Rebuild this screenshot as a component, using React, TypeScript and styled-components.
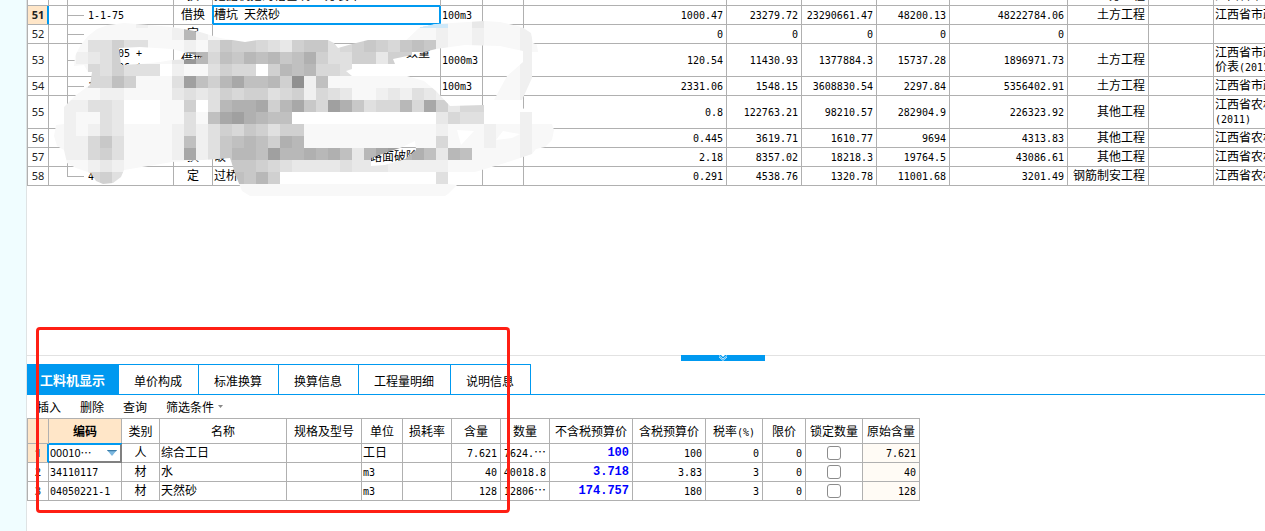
import React from 'react';
import styled, { createGlobalStyle, css } from 'styled-components';

const BLUE = '#0099f0';
const LINE = '#b0b0b0';
const PEACH = '#ffe6c8';

const GlobalStyle = createGlobalStyle`
  *, *::before, *::after { box-sizing: border-box; }
  body {
    margin: 0;
    background: #fff;
    color: #000;
    font: 12px/14px "Noto Sans CJK SC", sans-serif;
  }
  button, select { font: inherit; color: inherit; }
`;

const Page = styled.div`
  display: flex;
  height: 100vh;
  overflow: hidden;
`;

const SideStrip = styled.aside`
  flex: none;
  width: 27px;
  background: #f0fdff;
  border-right: 1px solid #dfe3e4;
`;

const Main = styled.main`
  flex: 1;
  min-width: 0;
  display: flex;
  flex-direction: column;
`;

const UpperPane = styled.section`
  position: relative;
  flex: 1;
  min-height: 0;
  overflow: hidden;
`;

const LowerPane = styled.section`
  position: relative;
  flex: none;
  min-height: 176px;
`;

const Mono = styled.span`
  font-family: "DejaVu Sans Mono", monospace;
  font-size: 10px;
  line-height: 10px;
`;

const Table = styled.table`
  table-layout: fixed;
  border-collapse: separate;
  border-spacing: 0;
  border-left: 1px solid ${LINE};
  width: 893px;
`;

/* Scrolled part-way down, with its last column running past the pane. */
const ScrolledTable = styled(Table)`
  width: calc(100% + 60px);
  margin-top: -13px;
`;

type Align = 'left' | 'center' | 'right';

const Cell = styled.td<{ $align?: Align; $soft?: boolean }>`
  padding: ${(p) => (p.$align === 'center' ? '0 0 2px' : '0 3px 2px 1px')};
  border-right: 1px solid ${LINE};
  border-bottom: 1px solid ${LINE};
  text-align: ${(p) => p.$align ?? 'left'};
  vertical-align: middle;
  white-space: nowrap;
  overflow: hidden;
  background: ${(p) => (p.$soft ? '#fffbf5' : 'transparent')};
`;

const Row = styled.tr<{ $tall?: boolean }>`
  height: ${(p) => (p.$tall ? '33px' : '19px')};
`;

const IndexCell = styled.th<{ $active?: boolean; $edge?: boolean }>`
  padding: 0;
  border-right: 1px solid ${LINE};
  border-bottom: 1px solid ${LINE};
  font: 11px/14px "Noto Sans", sans-serif;
  color: #222;
  text-align: center;
  ${(p) => p.$active && css`background: ${PEACH};`}
  ${(p) => p.$edge && css`
    font-weight: 700;
    border-right-color: ${BLUE};
    box-shadow: inset -1px 0 0 ${BLUE};
  `}
`;

const TreeCell = styled(Cell)<{ $last?: boolean }>`
  padding-left: 39px;
  background:
    linear-gradient(${LINE}, ${LINE}) 18px 0 / 1px ${(p) => (p.$last ? '50%' : '100%')} no-repeat,
    linear-gradient(${LINE}, ${LINE}) 18px 50% / 17px 1px no-repeat;
`;

const SelectedCell = styled(Cell)`
  position: relative;
  border-color: ${BLUE};
  box-shadow: -1px -1px 0 ${BLUE}, inset 1px 1px 0 ${BLUE}, inset -1px -1px 0 ${BLUE};
`;

const Indent = styled.span<{ $by: number }>`
  margin-left: ${(p) => p.$by}px;
`;

const HeadCell = styled.th<{ $active?: boolean }>`
  padding: 0 0 1px;
  border-right: 1px solid ${LINE};
  border-bottom: 1px solid ${LINE};
  font-weight: ${(p) => (p.$active ? 700 : 400)};
  background: ${(p) => (p.$active ? PEACH : '#fff')};
  white-space: nowrap;
`;

const HeadRow = styled.tr`
  & > th { border-top: 1px solid ${LINE}; height: 26px; }
`;

const Price = styled.b`
  font: 700 12px/14px "Liberation Mono", monospace;
  color: #00f;
`;

const Splitter = styled.div`
  display: flex;
  justify-content: center;
  height: 9px;
  padding-left: 154px;
  border-top: 1px solid #e2e2e2;
`;

const SplitterHandle = styled.button`
  width: 84px;
  height: 6px;
  margin-top: -1px;
  padding: 0;
  border: 0;
  background: ${BLUE};
  display: flex;
  justify-content: center;
`;

const TabBar = styled.nav`
  display: flex;
  height: 31px;
  border-bottom: 1px solid ${BLUE};
`;

const Tab = styled.button<{ $active?: boolean }>`
  padding: 2px 16px 0 15px;
  border: 0;
  border-top: 1px solid ${BLUE};
  border-right: 1px solid ${BLUE};
  background: #fff;
  ${(p) => p.$active && css`
    padding: 0 13px;
    background: ${BLUE};
    color: #fff;
    font-size: 13px;
    font-weight: 700;
  `}
`;

const Toolbar = styled.div`
  display: flex;
  align-items: center;
  gap: 19px;
  height: 23px;
  padding-left: 10px;
`;

const ToolButton = styled.button`
  display: flex;
  align-items: center;
  gap: 4px;
  padding: 0;
  border: 0;
  background: none;
`;

const DropCell = styled(Cell)`
  position: relative;
  padding: 0;
  border-right-color: #808080;
  border-bottom-color: #808080;
  box-shadow: -1px 0 0 ${BLUE}, 0 -1px 0 ${BLUE}, inset 0 1px 0 ${BLUE}, inset -1px -1px 0 #808080;
`;

const DropBody = styled.div`
  display: flex;
  align-items: center;
  padding-right: 4px;
`;

const CodeSelect = styled.select`
  appearance: none;
  flex: 1;
  min-width: 0;
  height: 16px;
  padding: 0 0 2px 1px;
  border: 0;
  background: transparent;
  font: 11px/14px "Noto Sans CJK SC", sans-serif;
`;

const Tick = styled.input`
  appearance: none;
  display: block;
  width: 14px;
  height: 14px;
  margin: 2px auto 0;
  border: 1px solid #8c8c8c;
  border-radius: 3px;
  background: #fff;
`;

const Mosaic = styled.svg`
  position: absolute;
  left: 25px;
  top: 16px;
  width: 504px;
  height: 180px;
`;

const Marker = styled.div`
  position: absolute;
  left: 9px;
  top: -28px;
  width: 474px;
  height: 186px;
  border: 3px solid #ff1f14;
  border-radius: 4px;
  pointer-events: none;
`;

/* Latin runs use the narrow fixed-width face, Chinese runs the page face. */
function T({ children }: { children: string }) {
  return (
    <>
      {children.split(/([\u2026\u2e80-\uffef]+)/).map((part, i) =>
        i % 2 ? part : part && <Mono key={i}>{part}</Mono>,
      )}
    </>
  );
}

type Quota = {
  no: number;
  code?: React.ReactNode;
  kind?: string;
  name?: React.ReactNode;
  unit?: string;
  nums: string[];
  work?: string;
  book?: string[];
  tall?: boolean;
};

const CITY = '江西省市政工程';
const FARM = '江西省农村公路';

const quotas: Quota[] = [
  { no: 50, kind: '换', name: '挖掘机挖沟槽基坑 土方装车', nums: ['', '', '', '', ''], work: '土方工程', book: [CITY] },
  { no: 51, code: <T>1-1-75</T>, kind: '借换', name: <T>槽坑 天然砂</T>, unit: '100m3', nums: ['1000.47', '23279.72', '23290661.47', '48200.13', '48222784.06'], work: '土方工程', book: [CITY] },
  { no: 52, kind: '定', nums: ['0', '0', '0', '0', '0'] },
  {
    no: 53,
    code: <><Indent $by={30}><T>05 +</T></Indent><br /><Indent $by={30}><T>06 *</T></Indent></>,
    kind: '借换',
    name: <><Indent $by={192}>数量</Indent><br />&nbsp;</>,
    unit: '1000m3',
    nums: ['120.54', '11430.93', '1377884.3', '15737.28', '1896971.73'],
    work: '土方工程',
    book: [CITY, '价表(2011)'],
    tall: true,
  },
  { no: 54, code: <T>1</T>, unit: '100m3', nums: ['2331.06', '1548.15', '3608830.54', '2297.84', '5356402.91'], work: '土方工程', book: [CITY] },
  { no: 55, nums: ['0.8', '122763.21', '98210.57', '282904.9', '226323.92'], work: '其他工程', book: [FARM, '(2011)'], tall: true },
  { no: 56, nums: ['0.445', '3619.71', '1610.77', '9694', '4313.83'], work: '其他工程', book: [FARM] },
  { no: 57, kind: '换', name: <>破<Indent $by={144}>路面破除</Indent></>, nums: ['2.18', '8357.02', '18218.3', '19764.5', '43086.61'], work: '其他工程', book: [FARM] },
  { no: 58, code: <T>4</T>, kind: '定', name: '过桥', nums: ['0.291', '4538.76', '1320.78', '11001.68', '3201.49'], work: '钢筋制安工程', book: [FARM] },
];

const quotaCols = [21, 125, 39, 228, 42, 41, 203, 75, 75, 73, 118, 81, 65];

const tabs = ['工料机显示', '单价构成', '标准换算', '换算信息', '工程量明细', '说明信息'];

const resourceCols = [21, 73, 38, 127, 75, 41, 49, 49, 49, 83, 73, 57, 43, 57, 57];
const resourceHeads = ['', '编码', '类别', '名称', '规格及型号', '单位', '损耗率', '含量', '数量', '不含税预算价', '含税预算价', '税率(%)', '限价', '锁定数量', '原始含量'];

const resources = [
  { code: '00010…', kind: '人', name: '综合工日', unit: '工日', content: '7.621', qty: '7624.…', net: '100', gross: '100', rate: '0' },
  { code: '34110117', kind: '材', name: '水', unit: 'm3', content: '40', qty: '40018.8', net: '3.718', gross: '3.83', rate: '3' },
  { code: '04050221-1', kind: '材', name: '天然砂', unit: 'm3', content: '128', qty: '12806…', net: '174.757', gross: '180', rate: '3' },
];

/* One letter per 12px block: a is white, each next letter 8 levels darker. */
const blocks = [
  'bbbbbbbcbbbbbbbbbbbbbbbbbbbbbbbbcbbdbbbbbb',
  'bbbbbbbbbbcjcbbbbbbbbbbbbbbbbbbbcbbcbbbcbb',
  'bbbeegeebbbcbehggfedghhefghgfhihcbbcbbbcbb',
  'bbcdegbbbbdnjfihjijhikgeeggdggaaabbbbbbcbb',
  'bbbfegeeeacbbegffagjijffeaaaaaaaabbbbbbcbb',
  'bbcffigbbbemigjliijgocibbbbbbbbbbbbbbbbcbb',
  'bbbbccbbbbdedegfggefgcfedbbcdcedcbbbbbbcbb',
  'bcceedaaabbgaejkklgjlhfmkheffjflgdffedaacb',
  'bcbbedaaabbebilmkjiiaaaaaaaaaaaadfeedaacbb',
  'bcbcedbbbbcecegfhgeggbbbbbbbbbbbcbbbcbbcbb',
  'bccfhebbbbcicehijigkjbbbbbbbbbbbfbbbcbbcbb',
  'bccfgebbbbclcehjjimjjkjkidjlmjkidjibbbbcbb',
  'bbbcdcbbbbbbbeghhgfeddddedddcccccbbbbbbbbb',
  'bbbfgeaaaaaaaaaihjgaaaaaaaaaaaaaeaaaaaaaaa',
  'bbbbbbbbbbbbbbbbbbbbbbbbbbbbbbbbbbbbbbbbbb',
];

const leftBrush =
  'M97 29 L108 25 L124 23 L148 25 L172 27 L200 32 L220 38 L245 42 L258 40 L328 40 L334 43 L338 48 L352 44 L368 40 L436 40 ' +
  'L436 49 L412 55 L393 59 L395 64 L352 64 L352 69 L346 71 L352 76 L407 76 L424 81 L436 91 L450 106 L484 105 L484 124 ' +
  'L520 124 L520 108 L532 110 L532 124 L552 124 L554 130 L552 140 L545 147 L536 149 L532 154 L505 163 L475 172 L448 172 L448 184 L457 185 ' +
  'L448 194 L445 196 L250 196 L242 191 L236 176 L230 158 L218 159 L172 162 L124 170 L121 177 L113 183 L103 184 L96 181 L91 173 L76 168 ' +
  'L67 163 L64 150 L57 146 L54 136 L56 125 L64 124 L64 107 L76 95 L90 85 L92 72 L88 72 L84 65 L74 66 L75 56 L80 46 L88 36 Z ' +
  'M119 48 L140 47 L172 49 L203 57 L196 59 L172 60 L160 62 L140 64 L121 65 Z ' +
  'M371 158 L371 166 L385 165 L405 159 L416 150 L415 141 L400 148 L385 153 Z ' +
  'M457 130 L474 131 L461 145 Z M496 140 L503 131 L520 134 L512 138 Z';

const loopBrush =
  'M420 27 L436 24 L484 21 L500 22 L522 27 L531 33 L533 43 L537 45 L538 52 L532 52 L532 78 L522 100 L494 100 L507 76 L523 62 L523 51 L500 46 L465 45 L436 49 L400 46 Z';

function Censor() {
  return (
    <Mosaic viewBox="52 16 504 180" aria-hidden="true" shapeRendering="crispEdges">
      <clipPath id="brush">
        <path clipRule="evenodd" d={leftBrush} />
        <path d={loopBrush} />
      </clipPath>
      <g clipPath="url(#brush)">
        {blocks.map((line, r) =>
          [...line].map((ch, c) => {
            const v = ch === 'a' ? 255 : 256 - (ch.charCodeAt(0) - 97) * 8;
            return <rect key={`${r}-${c}`} x={52 + c * 12} y={16 + r * 12} width={12} height={12} fill={`rgb(${v},${v},${v})`} />;
          }),
        )}
        <path d="M420 27 L436 24 H448 V28 H420 Z" fill="#cfe8f8" />
      </g>
    </Mosaic>
  );
}

function QuotaTable() {
  return (
    <ScrolledTable>
      <colgroup>
        {quotaCols.map((w, i) => <col key={i} width={w} />)}
        <col />
      </colgroup>
      <tbody>
        {quotas.map((q) => {
          const active = q.no === 51;
          const Name = active ? SelectedCell : Cell;
          return (
            <Row key={q.no} $tall={q.tall}>
              <IndexCell scope="row" $active={active} $edge={active}>{q.no}</IndexCell>
              <TreeCell $last={q.no === 58}>{q.code}</TreeCell>
              <Cell $align="center">{q.kind}</Cell>
              <Name>{q.name}</Name>
              <Cell>{q.unit && <T>{q.unit}</T>}</Cell>
              <Cell />
              {q.nums.map((n, i) => <Cell key={i} $align="right"><T>{n}</T></Cell>)}
              <Cell $align="right">{q.work}</Cell>
              <Cell />
              <Cell>
                {q.book?.map((line, i) => <div key={i}><T>{line}</T></div>)}
              </Cell>
            </Row>
          );
        })}
      </tbody>
    </ScrolledTable>
  );
}

function ResourceTable() {
  return (
    <Table>
      <colgroup>
        {resourceCols.map((w, i) => <col key={i} width={w} />)}
      </colgroup>
      <thead>
        <HeadRow>
          {resourceHeads.map((h, i) => <HeadCell key={i} scope="col" $active={i < 2}><T>{h}</T></HeadCell>)}
        </HeadRow>
      </thead>
      <tbody>
        {resources.map((r, i) => (
          <Row key={r.code}>
            <IndexCell scope="row" $active={i === 0} $edge={i === 0}>{i + 1}</IndexCell>
            {i === 0 ? (
              <DropCell>
                <DropBody>
                  <CodeSelect aria-label="编码"><option>{r.code}</option></CodeSelect>
                  <svg width="10" height="6" viewBox="0 0 10 6" aria-hidden="true">
                    <path d="M0 0 H10 L5 6 Z" fill="#7db8e0" />
                    <path d="M0 0 H10 L9 1.3 H1 Z" fill="#3a7ca8" />
                  </svg>
                </DropBody>
              </DropCell>
            ) : (
              <Cell><T>{r.code}</T></Cell>
            )}
            <Cell $align="center">{r.kind}</Cell>
            <Cell>{r.name}</Cell>
            <Cell />
            <Cell><T>{r.unit}</T></Cell>
            <Cell />
            <Cell $align="right"><T>{r.content}</T></Cell>
            <Cell $align="right"><T>{r.qty}</T></Cell>
            <Cell $align="right"><Price>{r.net}</Price></Cell>
            <Cell $align="right"><T>{r.gross}</T></Cell>
            <Cell $align="right"><T>{r.rate}</T></Cell>
            <Cell $align="right"><T>0</T></Cell>
            <Cell $align="center"><Tick type="checkbox" aria-label={`锁定数量 ${r.name}`} /></Cell>
            <Cell $align="right" $soft><T>{r.content}</T></Cell>
          </Row>
        ))}
      </tbody>
    </Table>
  );
}

export default function App() {
  return (
    <Page>
      <GlobalStyle />
      <SideStrip />
      <Main>
        <UpperPane>
          <QuotaTable />
          <Censor />
        </UpperPane>
        <LowerPane>
          <Splitter>
            <SplitterHandle aria-label="收起">
              <svg width="10" height="6" viewBox="0 0 10 6" fill="none" stroke="#bfe4fb" aria-hidden="true">
                <path d="M3 0 H7 L5 2 Z" fill="#fff" stroke="none" />
                <path d="M1 0.5 L5 4 L9 0.5 M1 2 L5 5.5 L9 2" />
              </svg>
            </SplitterHandle>
          </Splitter>
          <TabBar>
            {tabs.map((t, i) => <Tab key={t} $active={i === 0}>{t}</Tab>)}
          </TabBar>
          <Toolbar>
            <ToolButton>插入</ToolButton>
            <ToolButton>删除</ToolButton>
            <ToolButton>查询</ToolButton>
            <ToolButton>
              筛选条件
              <svg width="5" height="3" viewBox="0 0 5 3" aria-hidden="true"><path d="M0 0 H5 L2.5 3 Z" fill="#888" /></svg>
            </ToolButton>
          </Toolbar>
          <ResourceTable />
          <Marker />
        </LowerPane>
      </Main>
    </Page>
  );
}
